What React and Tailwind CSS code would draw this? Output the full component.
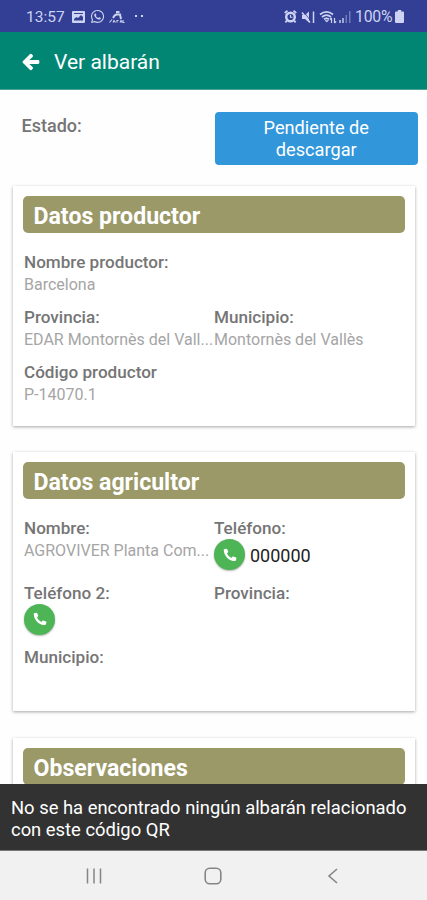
import { FaArrowLeft, FaWhatsapp } from "react-icons/fa";

export default function App() {
  return (
    <div className="flex h-[900px] w-[427px] flex-col overflow-hidden bg-[#fefefe] font-[Roboto,sans-serif]">
      <StatusBar />
      <header className="flex h-[58px] shrink-0 items-center border-b border-[#4aa597] bg-[#018674] pt-[3px] pl-[22px] text-white">
        <FaArrowLeft className="size-[18px] stroke-white stroke-[30]" />
        <h1 className="ml-[14px] text-[21px] leading-6 whitespace-nowrap">Ver albarán</h1>
      </header>

      <main className="flex min-h-0 flex-1 flex-col overflow-hidden">
        <div className="flex shrink-0 pt-[22px] pr-[9px] pl-[21.500px]">
          <div className="w-[193px] pt-[3px] text-[18px] leading-[22px] font-medium text-[#757575]">Estado:</div>
          <div className="h-[53px] flex-1 rounded-[4px] bg-[#3296db] pt-[5px] text-center text-[18.2px] leading-[22px] text-white">
            Pendiente de
            <br />
            descargar
          </div>
        </div>

        <Card title="Datos productor" className="mt-[21px] h-[240px]">
          <Field label="Nombre productor:" value="Barcelona" />
          <div />
          <Field label="Provincia:" value="EDAR Montornès del Vall..." />
          <Field label="Municipio:" value="Montornès del Vallès" />
          <Field label="Código productor" value="P-14070.1" />
        </Card>

        <Card title="Datos agricultor" className="mt-[26px] h-[259px]">
          <Field label="Nombre:" value="AGROVIVER Planta Com..." />
          <PhoneField label="Teléfono:" number="000000" />
          <PhoneField label="Teléfono 2:" />
          <Field label="Provincia:" />
          <Field label="Municipio:" />
        </Card>

        <Card title="Observaciones" className="mt-[27px] h-[120px]" />
      </main>

      {/* snackbar */}
      <div className="h-[67px] shrink-0 border-b border-[#777] bg-[#323232] pt-[13px] pl-[11px] text-[18.4px] leading-[22px] whitespace-nowrap text-white">
        No se ha encontrado ningún albarán relacionado
        <br />
        con este código QR
      </div>
      <NavBar />
    </div>
  );
}

function StatusBar() {
  return (
    <div className="flex h-8 shrink-0 items-center bg-[#323f94] pt-px pr-[23px] pl-[26px] text-[#cdd3f2]">
      <span className="w-[39px] text-[15.5px] leading-5">13:57</span>
      <svg className="ml-[7px] h-3 w-[13px]" viewBox="0 0 13 12">
        <rect width="13" height="12" rx="1" fill="currentColor" />
        <path d="M2 9.5V8l2.5-2 1.5 1 3-3 2 2v3.500z" fill="#323f94" />
        <rect x="2" y="2" width="9" height="1" fill="#323f94" />
      </svg>
      <FaWhatsapp className="ml-[5px] size-[15px]" />
      <svg className="ml-1 h-[14px] w-[16px]" viewBox="0 0 16 14" fill="none" stroke="currentColor">
        <path d="M4 8l1.500-2.500 3-1.500M7 2h3.500M8 4.500h3l1 4.500" strokeWidth="2" />
        <path d="M.5 12.500l2.500-3M4 12.500l1-2 1.500 2M8 12.500v-2h1.500M11 12.500l1-2 1 2M14 10v2.500h1.500" strokeWidth="1.100" />
      </svg>
      <span className="-mt-0.5 ml-[10px] size-[2px] bg-current" />
      <span className="-mt-0.5 ml-[4px] size-[2px] bg-current" />

      <svg className="ml-auto h-[13px] w-[13px]" viewBox="0 0 13 13" fill="none" stroke="currentColor">
        <circle cx="6.500" cy="7" r="4.300" strokeWidth="2.400" />
        <path d="M.7 3 3.500.8M12.300 3 9.500.8M2.800 10.500 1.500 12.500M10.200 10.500l1.300 2" strokeWidth="1.800" />
        <path d="M6.500 4.800v2.500h2" strokeWidth="1.100" />
      </svg>
      <svg className="ml-[4px] h-[14px] w-[14px]" viewBox="0 0 14 14">
        <path d="M1 5h3l4-3.500v11L4 9H1z" fill="currentColor" />
        <path d="M2.500 1.500l7 9" stroke="#323f94" strokeWidth=".8" />
        <path d="M1 2.500l8 10M12.500 1.500v11.500" stroke="currentColor" strokeWidth="1.500" />
      </svg>
      <svg className="ml-1 h-[14px] w-[18px]" viewBox="0 0 18 14" fill="none" stroke="currentColor">
        <path d="M1 4.500Q7.500-.8 14 4.500M3 7Q7.500 3.300 12 7M5 9.300q2.500-1.800 5 0" strokeWidth="1.700" />
        <path d="M6 10.500h3.500L7.800 12z" fill="currentColor" strokeWidth=".6" />
        <path d="M12.500 8v5M11 9.500l1.500-1.700M15.500 8v5M15.500 13l1.700-1.700" strokeWidth="1.200" />
      </svg>
      <svg className="ml-px h-[13px] w-[13px]" viewBox="0 0 13 13" fill="currentColor">
        <path d="M1 10h2v3H1zM4 8h2v5H4z" opacity=".7" />
        <path d="M7.500 5h1.500v8H7.500zM11 1h1.500v12H11z" opacity=".4" />
      </svg>
      <span className="ml-[4px] w-[37px] text-[15.8px] leading-5 tracking-[-0.2px]">100%</span>
      <svg className="ml-[3px] h-[13px] w-[9px]" viewBox="0 0 9 13" fill="currentColor">
        <path d="M2.800 0h3.400v1.500H8q1 0 1 1V12q0 1-1 1H1q-1 0-1-1V2.500q0-1 1-1h1.800z" />
      </svg>
    </div>
  );
}

function Card({ title, className, children }) {
  return (
    <section
      className={`mr-[12px] ml-[13px] shrink-0 bg-white px-[11px] pt-[10px] shadow-[0_1px_3px_rgba(0,0,0,0.35)] ${className}`}
    >
      <h2 className="-mr-px -ml-px h-[37px] rounded-[5px] bg-[#9b9968] pl-[10.500px] text-[23.1px] leading-[41px] font-bold whitespace-nowrap text-white">
        {title}
      </h2>
      <div className="mt-[18px] grid grid-cols-[190px_1fr] gap-y-[11px]">{children}</div>
    </section>
  );
}

function Label({ children }) {
  return <div className="text-[17.1px] leading-[22px] font-medium whitespace-nowrap text-[#757575]">{children}</div>;
}

function Field({ label, value }) {
  return (
    <div className="min-w-0">
      <Label>{label}</Label>
      {value && <div className="h-[22px] text-[16px] leading-[23px] whitespace-nowrap text-[#a5a5a5]">{value}</div>}
    </div>
  );
}

function PhoneField({ label, number }) {
  return (
    <div>
      <Label>{label}</Label>
      <div className="flex h-[31.500px] items-center">
        <button className="flex size-[31px] items-center justify-center rounded-full bg-[#4eb556] shadow-[0_1px_2px_rgba(0,0,0,0.3)]">
          <PhoneIcon />
        </button>
        {number && <span className="ml-[5px] pt-[3px] text-[18px] leading-[22px] text-[#222]">{number}</span>}
      </div>
    </div>
  );
}

function PhoneIcon() {
  return (
    <svg className="size-[14px]" viewBox="0 0 14 14" fill="white">
      <path d="M1.200 1.300 3.300.7q.6-.1.9.5l1 2.400q.2.600-.3 1L3.900 5.500q1.400 3 4.600 4.500l.9-1.200q.4-.5 1-.3l2.600 1q.6.3.4.9l-.6 2.100q-.2.6-.9.600Q7.500 13.100 4 9.700.7 6.200.7 2q0-.5.5-.7z" />
    </svg>
  );
}

function NavBar() {
  return (
    <nav className="flex h-[49px] shrink-0 items-center bg-[#f1f1f1] pt-px pl-[85px]">
      <svg className="h-[18px] w-[18px]" viewBox="0 0 18 18" stroke="#858585" strokeWidth="1.500">
        <path d="M2.500 1.500v15M9 1.500v15M15.500 1.500v15" />
      </svg>
      <svg className="ml-[101px] h-[18px] w-[18px]" viewBox="0 0 18 18" fill="none" stroke="#858585" strokeWidth="1.600">
        <rect x="1.200" y="1.200" width="15.600" height="15.600" rx="4.500" />
      </svg>
      <svg className="ml-[102px] h-[18px] w-[18px]" viewBox="0 0 18 18" fill="none" stroke="#858585" strokeWidth="1.600">
        <path d="M13 2 5 9l8 7" />
      </svg>
    </nav>
  );
}
